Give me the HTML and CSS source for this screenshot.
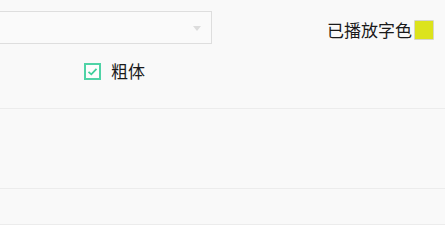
FILE: index.html
```html
<!DOCTYPE html>
<html lang="zh">
<head>
    <meta charset="UTF-8">
    <title>字幕设置</title>
    <link rel="stylesheet" href="styles.css">
</head>
<body>
    <div class="panel">
        <div class="row top-row">
            <div class="select-box">
                <span class="select-arrow"></span>
            </div>
            <div class="color-pick">
                <span class="color-label">已播放字色</span>
                <span class="swatch"></span>
            </div>
        </div>
        <div class="row check-row">
            <label class="check">
                <span class="check-box">
                    <svg width="11" height="11" viewBox="0 0 11 11">
                        <polyline points="1.5,5.8 4.3,8.3 9.5,2.8" fill="none" stroke="#3fcf9c" stroke-width="1.8"/>
                    </svg>
                </span>
                <span class="check-text">粗体</span>
            </label>
        </div>
        <div class="section section-tall"></div>
        <div class="section section-short"></div>
    </div>
</body>
</html>
```

FILE: styles.css
```css
body {
    margin: 0;
    background-color: #f9f9f9;
    font-family: "Noto Sans CJK SC", "Noto Sans", sans-serif;
    color: #1a1a1a;
    overflow: hidden;
}

.panel {
    width: 445px;
}

.row {
    display: flex;
    align-items: center;
}

.top-row {
    justify-content: space-between;
    padding-top: 11px;
}

.select-box {
    width: 232px;
    height: 33px;
    margin-left: -20px;
    border: 1px solid #dedede;
    background-color: #fafafa;
    display: flex;
    align-items: center;
    justify-content: flex-end;
    padding-right: 10px;
    box-sizing: border-box;
}

.select-arrow {
    width: 0;
    height: 0;
    border-left: 4px solid transparent;
    border-right: 4px solid transparent;
    border-top: 5px solid #dcdcdc;
    margin-top: 1px;
}

.color-pick {
    display: flex;
    align-items: center;
    gap: 2px;
    margin-right: 11px;
    margin-top: 4px;
}

.color-label {
    font-size: 17px;
    line-height: 20px;
}

.swatch {
    width: 18px;
    height: 18px;
    background-color: #dce31c;
    border: 1px solid #d6d6c8;
    border-radius: 1px;
}

.check-row {
    padding-left: 84px;
    height: 56px;
    margin-top: 8px;
    align-items: flex-start;
    padding-top: 9px;
    box-sizing: border-box;
}

.check {
    display: flex;
    align-items: center;
    gap: 10px;
}

.check-box {
    width: 13px;
    height: 13px;
    border: 2px solid #4fd3a6;
    background-color: #fdfdfd;
    display: flex;
    align-items: center;
    justify-content: center;
}

.check-text {
    font-size: 17px;
    line-height: 20px;
}

.section {
    border-top: 1px solid #ececec;
}

.section-tall {
    height: 79px;
}

.section-short {
    height: 35px;
    border-bottom: 1px solid #ececec;
}
```
